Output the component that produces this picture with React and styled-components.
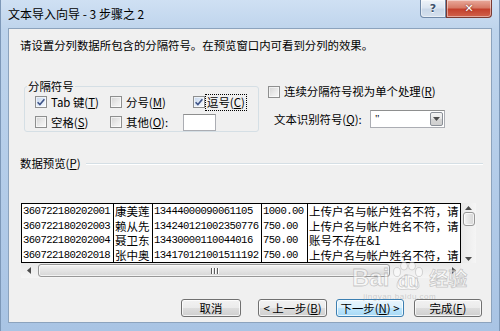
import styled, { createGlobalStyle } from "styled-components";

const GlobalStyle = createGlobalStyle`
  html, body {
    margin: 0;
    padding: 0;
    overflow: hidden;
  }
  body {
    width: 500px;
    height: 331px;
    font-family: "Noto Sans CJK SC", "Noto Sans", sans-serif;
    font-size: 11.4px;
    color: #000;
  }
`;

const rows = [
  ["360722180202001", "康美莲", "13444000090061105", "1000.00", "上传户名与帐户姓名不符，请"],
  ["360722180202003", "赖从先", "134240121002350776", "750.00", "上传户名与帐户姓名不符，请"],
  ["360722180202004", "聂卫东", "13430000110044016", "750.00", "账号不存在&1"],
  ["360722180202018", "张中奥", "134170121001511192", "750.00", "上传户名与帐户姓名不符，请"],
];
const monoCols = [true, false, true, true, false];

const Window = styled.div`
  position: relative;
  width: 500px;
  height: 331px;
  box-sizing: border-box;
  display: flex;
  flex-direction: column;
  background: linear-gradient(180deg, #cfe0f3 0%, #bed4ec 30px, #b2cbe8 60%, #a9c4e4 100%);
  border-left: 1px solid #7d98b8;
  border-right: 1px solid #7d98b8;
`;

const TitleBar = styled.div`
  height: 28px;
  flex: none;
  display: flex;
  align-items: flex-start;
  padding-left: 7px;
`;

const Title = styled.div`
  font-size: 12px;
  line-height: 28px;
  color: #000;
  white-space: pre;
`;

const CaptionButtons = styled.div`
  margin-left: auto;
  margin-right: 7px;
  display: flex;
`;

const CaptionButton = styled.div`
  width: ${(p) => p.$w}px;
  height: 18px;
  box-sizing: border-box;
  display: flex;
  align-items: center;
  justify-content: center;
  border: 1px solid ${(p) => (p.$close ? "#7a3a32" : "#7089a8")};
  border-top: none;
  border-radius: ${(p) => (p.$close ? "0 0 4px 0" : "0 0 0 4px")};
  background: ${(p) =>
    p.$close
      ? "linear-gradient(180deg, #e9aa9c 0%, #d77b67 45%, #c4412d 55%, #d0624c 100%)"
      : "linear-gradient(180deg, #eef3f9 0%, #dbe5f1 45%, #c9d7e8 55%, #d5e1ee 100%)"};
  box-shadow: inset 0 0 0 1px rgba(255, 255, 255, 0.45);
  color: ${(p) => (p.$close ? "#fff" : "#3b4f6b")};
  font-family: "DejaVu Sans", sans-serif;
  font-weight: bold;
  font-size: 11px;
  text-shadow: ${(p) => (p.$close ? "0 0 2px #5a1a12" : "0 1px 0 #fff")};
`;

const Client = styled.div`
  flex: 1;
  margin: 0 7px 8px 7px;
  border: 1px solid #8ca3bd;
  background: #f0f0f0;
  display: flex;
  flex-direction: column;
  padding: 8px 8px 5px 11px;
`;

const Intro = styled.div`
  line-height: 16px;
  white-space: nowrap;
`;

const OptionsRow = styled.div`
  display: flex;
  align-items: flex-start;
  margin-top: 26px;
`;

const GroupBox = styled.fieldset`
  margin: 0 0 0 4px;
  padding: 0 0 0 10px;
  width: 235px;
  box-sizing: border-box;
  border: 1px solid #d5dfe5;
  border-radius: 3px;
  min-inline-size: 0;
`;

const Legend = styled.legend`
  margin-left: -8px;
  padding: 0 1px;
  line-height: 14px;
`;

const OptRow = styled.div`
  display: flex;
  align-items: center;
  height: 18px;
  & + & {
    margin-top: 2px;
  }
`;

const Option = styled.label`
  display: flex;
  align-items: center;
  width: ${(p) => (p.$w ? `${p.$w}px` : "auto")};
  flex: none;
  line-height: 16px;
  white-space: nowrap;
`;

const Box = styled.span`
  width: 12px;
  height: 12px;
  box-sizing: border-box;
  flex: none;
  border: 1px solid #8e8f8f;
  background: ${(p) =>
    p.$checked
      ? "linear-gradient(135deg, #c4d5ec 0%, #e6eef8 60%, #f6f9fd 100%)"
      : "linear-gradient(135deg, #d3d3d3 0%, #ececec 60%, #f8f8f8 100%)"};
  box-shadow: inset 0 0 0 1px rgba(255, 255, 255, 0.6);
  display: flex;
  align-items: center;
  justify-content: center;
  margin-right: ${(p) => p.$gap ?? 3}px;
`;

const Caption = styled.span`
  padding: 0 1px;
  outline: ${(p) => (p.$focus ? "1px dotted #000" : "none")};
  outline-offset: 0;
  line-height: 15px;
  & u {
    text-underline-offset: 1px;
  }
`;

const TextBox = styled.div`
  width: 33px;
  height: 17px;
  box-sizing: border-box;
  margin-left: 14px;
  border: 1px solid #abadb3;
  border-top-color: #8e8f8f;
  background: #fff;
`;

const SideColumn = styled.div`
  display: flex;
  flex-direction: column;
  margin-left: 9px;
  padding-top: 5px;
`;

const ComboRow = styled.div`
  display: flex;
  align-items: center;
  height: 18px;
  margin-top: 11px;
  padding-left: 6px;
`;

const ComboLabel = styled.span`
  width: 96px;
  flex: none;
  line-height: 16px;
  white-space: nowrap;
`;

const Combo = styled.div`
  width: 75px;
  height: 18px;
  box-sizing: border-box;
  border: 1px solid #abadb3;
  border-top-color: #8e8f8f;
  background: #fff;
  display: flex;
  align-items: stretch;
  padding: 1px;
`;

const ComboValue = styled.span`
  flex: 1;
  font-family: "Liberation Serif", serif;
  font-size: 11px;
  line-height: 12px;
  padding-left: 3px;
`;

const DropButton = styled.span`
  width: 13px;
  box-sizing: border-box;
  border: 1px solid #8a8f97;
  border-radius: 2px;
  background: linear-gradient(180deg, #f4f4f4 0%, #e6e6e6 50%, #d6d6d6 51%, #cfcfcf 100%);
  display: flex;
  align-items: center;
  justify-content: center;
`;

const Heading = styled.div`
  display: flex;
  align-items: center;
  margin-top: 23px;
  line-height: 16px;
`;

const Rule = styled.div`
  flex: 1;
  margin-left: 5px;
  margin-top: 1px;
  border-top: 1px solid #d5dfe5;
  border-bottom: 1px solid #ffffff;
`;

const PreviewPane = styled.div`
  display: grid;
  grid-template-columns: 440px 15px;
  grid-template-rows: 60px 15px;
  margin: 32px 0 0 1px;
  width: 455px;
`;

const DataGrid = styled.div`
  display: grid;
  grid-template-columns: 92px 39px 109px 46px 1fr;
  grid-auto-rows: 14.5px;
  box-sizing: border-box;
  border: 1px solid #000;
  background: #fff;
  overflow: hidden;
`;

const Cell = styled.div`
  border-right: 1px solid #000;
  overflow: hidden;
  white-space: nowrap;
  padding-left: 1px;
  line-height: 14.5px;
  font-family: ${(p) => (p.$mono ? '"Liberation Mono", monospace' : '"Noto Sans CJK SC", sans-serif')};
  font-size: ${(p) => (p.$mono ? "10.6px" : "11.5px")};
  letter-spacing: ${(p) => (p.$mono ? "-0.55px" : "0")};
  &:nth-child(5n) {
    border-right: none;
  }
`;

const VScroll = styled.div`
  display: flex;
  flex-direction: column;
  align-items: center;
  background: linear-gradient(90deg, #e8e8e8, #f5f5f5);
`;

const HScroll = styled.div`
  display: flex;
  align-items: center;
  background: linear-gradient(180deg, #e8e8e8, #f5f5f5);
`;

const Arrow = styled.div`
  flex: none;
  width: 15px;
  height: ${(p) => (p.$vertical ? "9px" : "15px")};
  display: flex;
  align-items: center;
  justify-content: center;
`;

const Thumb = styled.div`
  flex: none;
  box-sizing: border-box;
  border: 1px solid #979797;
  border-radius: 3px;
  width: ${(p) => (p.$vertical ? "12px" : `${p.$len}px`)};
  height: ${(p) => (p.$vertical ? `${p.$len}px` : "13px")};
  margin-left: ${(p) => (p.$vertical ? 0 : 2)}px;
  background: ${(p) =>
    p.$vertical
      ? "linear-gradient(90deg, #f4f4f4 0%, #e4e4e4 50%, #d6d6d6 100%)"
      : "linear-gradient(180deg, #f4f4f4 0%, #e4e4e4 50%, #d6d6d6 100%)"};
  box-shadow: inset 0 0 0 1px rgba(255, 255, 255, 0.7);
  display: flex;
  align-items: center;
  justify-content: center;
`;

const Grip = styled.div`
  display: flex;
  gap: 2px;
  & > span {
    width: 1px;
    height: 6px;
    background: #5d5d5d;
    box-shadow: 1px 0 0 #fff;
  }
`;

const Spacer = styled.div`
  flex: 1;
`;

const ButtonRow = styled.div`
  display: flex;
  justify-content: flex-end;
  margin-top: auto;
  margin-right: 1px;
`;

const Button = styled.div`
  width: ${(p) => p.$w}px;
  height: 18px;
  box-sizing: border-box;
  margin-left: ${(p) => p.$ml || 0}px;
  border: 1px solid ${(p) => (p.$focus ? "#3c7fb1" : "#707070")};
  border-radius: 3px;
  background: ${(p) =>
    p.$focus
      ? "linear-gradient(180deg, #eaf6fd 0%, #d9f0fc 50%, #bee6fd 51%, #a7d9f5 100%)"
      : "linear-gradient(180deg, #f2f2f2 0%, #ebebeb 50%, #dddddd 51%, #cfcfcf 100%)"};
  box-shadow: inset 0 0 0 1px rgba(255, 255, 255, 0.75);
  display: flex;
  align-items: center;
  justify-content: center;
  line-height: 16px;
  white-space: pre;
  & u {
    text-underline-offset: 1px;
  }
`;

/* Baidu watermark laid over the bottom-right corner */
const Watermark = styled.div`
  position: absolute;
  left: 351px;
  top: 264px;
  display: flex;
  flex-direction: column;
  align-items: center;
  pointer-events: none;
`;

const MarkLine = styled.div`
  display: flex;
  align-items: flex-end;
  font-family: "Liberation Sans", sans-serif;
  font-weight: bold;
  font-size: 24px;
  line-height: 28px;
  color: rgba(255, 255, 255, 0.55);
  -webkit-text-stroke: 0.8px rgba(140, 140, 140, 0.45);
`;

const Paw = styled.span`
  position: relative;
  display: flex;
  align-items: flex-end;
  justify-content: center;
  width: 36px;
  height: 28px;
  margin: 0 1px;
  & > svg {
    position: absolute;
    left: 2px;
    top: -2px;
  }
  & > b {
    position: relative;
    font-size: 17px;
    line-height: 20px;
  }
`;

const MarkCjk = styled.span`
  font-family: "Noto Sans CJK SC", sans-serif;
  font-size: 19px;
  line-height: 28px;
  margin-left: 2px;
`;

const MarkUrl = styled.div`
  font-family: "Liberation Sans", sans-serif;
  font-size: 8px;
  line-height: 10px;
  color: rgba(150, 150, 150, 0.4);
  letter-spacing: 0.5px;
  margin-right: 20px;
`;

function CheckBox({ checked, gap }) {
  return (
    <Box $checked={checked} $gap={gap}>
      {checked && (
        <svg width="10" height="10" viewBox="0 0 10 10">
          <path d="M1.6 5.2 L3.9 7.6 L8.4 2.2" fill="none" stroke="#3f5488" strokeWidth="1.6" />
        </svg>
      )}
    </Box>
  );
}

function Triangle({ dir }) {
  const pts = {
    up: "0,4 3.5,0 7,4",
    down: "0,0 3.5,4 7,0",
    left: "4,0 0,3.5 4,7",
    right: "0,0 4,3.5 0,7",
  }[dir];
  const vertical = dir === "up" || dir === "down";
  return (
    <svg width={vertical ? 7 : 4} height={vertical ? 4 : 7} viewBox={vertical ? "0 0 7 4" : "0 0 4 7"}>
      <polygon points={pts} fill="#4d4d4d" />
    </svg>
  );
}

export default function App() {
  return (
    <>
      <GlobalStyle />
      <Window>
        <TitleBar>
          <Title>文本导入向导 - 3 步骤之 2</Title>
          <CaptionButtons>
            <CaptionButton $w={26}>?</CaptionButton>
            <CaptionButton $w={46} $close>
              ✕
            </CaptionButton>
          </CaptionButtons>
        </TitleBar>

        <Client>
          <Intro>请设置分列数据所包含的分隔符号。在预览窗口内可看到分列的效果。</Intro>

          <OptionsRow>
            <GroupBox>
              <Legend>分隔符号</Legend>
              <OptRow>
                <Option $w={75}>
                  <CheckBox checked />
                  <Caption>Tab 键(<u>T</u>)</Caption>
                </Option>
                <Option $w={83}>
                  <CheckBox />
                  <Caption>分号(<u>M</u>)</Caption>
                </Option>
                <Option>
                  <CheckBox checked gap={1} />
                  <Caption $focus>逗号(<u>C</u>)</Caption>
                </Option>
              </OptRow>
              <OptRow>
                <Option $w={75}>
                  <CheckBox />
                  <Caption>空格(<u>S</u>)</Caption>
                </Option>
                <Option>
                  <CheckBox />
                  <Caption>其他(<u>O</u>):</Caption>
                </Option>
                <TextBox />
              </OptRow>
            </GroupBox>

            <SideColumn>
              <Option>
                <CheckBox />
                <Caption>连续分隔符号视为单个处理(<u>R</u>)</Caption>
              </Option>
              <ComboRow>
                <ComboLabel>
                  文本识别符号(<u>Q</u>):
                </ComboLabel>
                <Combo>
                  <ComboValue>"</ComboValue>
                  <DropButton>
                    <Triangle dir="down" />
                  </DropButton>
                </Combo>
              </ComboRow>
            </SideColumn>
          </OptionsRow>

          <Heading>
            <span>
              数据预览(<u>P</u>)
            </span>
            <Rule />
          </Heading>

          <PreviewPane>
            <DataGrid>
              {rows.map((row, r) =>
                row.map((text, c) => (
                  <Cell key={`${r}-${c}`} $mono={monoCols[c]}>
                    {text}
                  </Cell>
                ))
              )}
            </DataGrid>
            <VScroll>
              <Arrow $vertical>
                <Triangle dir="up" />
              </Arrow>
              <Thumb $vertical $len={14} />
              <Spacer />
              <Arrow $vertical>
                <Triangle dir="down" />
              </Arrow>
            </VScroll>
            <HScroll>
              <Arrow>
                <Triangle dir="left" />
              </Arrow>
              <Thumb $len={352}>
                <Grip>
                  <span />
                  <span />
                  <span />
                </Grip>
              </Thumb>
              <Spacer />
              <Arrow>
                <Triangle dir="right" />
              </Arrow>
            </HScroll>
            <div />
          </PreviewPane>

          <ButtonRow>
            <Button $w={60}>取消</Button>
            <Button $w={69} $ml={17}>
              &lt; 上一步(<u>B</u>)
            </Button>
            <Button $w={68} $ml={9} $focus>
              下一步(<u>N</u>) &gt;
            </Button>
            <Button $w={68} $ml={10}>
              完成(<u>F</u>)
            </Button>
          </ButtonRow>
        </Client>

        <Watermark>
          <MarkLine>
            Bai
            <Paw>
              <svg width="32" height="28" viewBox="0 0 32 28">
                <g fill="rgba(255,255,255,0.5)" stroke="rgba(140,140,140,0.4)" strokeWidth="0.8">
                  <ellipse cx="5" cy="10" rx="3.5" ry="4.5" />
                  <ellipse cx="12" cy="4" rx="3.5" ry="4" />
                  <ellipse cx="20" cy="4" rx="3.5" ry="4" />
                  <ellipse cx="27" cy="10" rx="3.5" ry="4.5" />
                  <path d="M5 24 C5 17 11 13 16 13 C21 13 27 17 27 24 C27 28 21 28 16 27 C11 28 5 28 5 24 Z" />
                </g>
              </svg>
              <b>du</b>
            </Paw>
            <MarkCjk>经验</MarkCjk>
          </MarkLine>
          <MarkUrl>jingyan.baidu.com</MarkUrl>
        </Watermark>
      </Window>
    </>
  );
}
